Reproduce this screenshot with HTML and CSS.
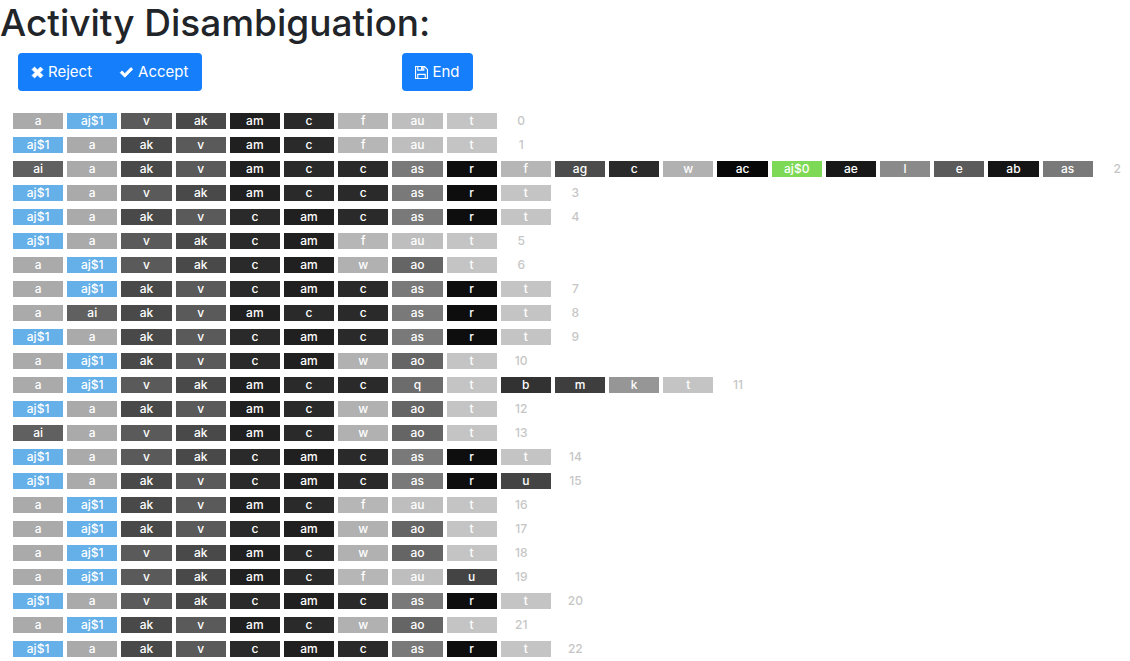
FILE: index.html
```html
<!DOCTYPE html>
<html lang="en">
<head>
<meta charset="utf-8">
<meta name="viewport" content="width=device-width, initial-scale=1">
<title>Activity Disambiguation</title>
<link rel="stylesheet" href="styles.css">
</head>
<body>
<main class="page">
  <h1 class="title">Activity Disambiguation:</h1>
  <div class="toolbar">
    <div class="button-group">
      <button class="button" type="button">
        <svg class="icon" viewBox="0 0 14 14" aria-hidden="true"><path d="M3.8 1.2 7 4.4 10.2 1.2 12.8 3.8 9.6 7 12.8 10.2 10.2 12.8 7 9.6 3.8 12.8 1.2 10.2 4.4 7 1.2 3.8Z" fill="currentColor" stroke="currentColor" stroke-linejoin="round"/></svg>
        Reject
      </button>
      <button class="button" type="button">
        <svg class="icon icon-wide" viewBox="0 0 16 14" aria-hidden="true"><path d="M1.3 7.2 3.2 5.3 6.2 8.3 12.8 1.7 14.7 3.6 6.2 12.1Z" fill="currentColor" stroke="currentColor" stroke-linejoin="round"/></svg>
        Accept
      </button>
    </div>
    <button class="button" type="button">
      <svg class="icon" viewBox="0 0 14 14" aria-hidden="true"><path d="M.6.6h9.7l3.1 3.1v9.7H.6ZM3 .5v4h6.5v-4M3 13.5V9h8v4.5" fill="none" stroke="currentColor" stroke-width="1.2"/><path d="M6.5 1h2v3h-2Z" fill="currentColor"/></svg>
      End
    </button>
  </div>
  <ol class="traces" id="traces"></ol>
</main>
<script src="traces.js"></script>
</body>
</html>
```
FILE: styles.css
```css
* {
  box-sizing: border-box;
}

body {
  margin: 0;
  background: #fff;
  color: #212529;
  font-family: Inter, "Liberation Sans", sans-serif;
  font-size: 15px;
  line-height: 24px;
}

.page {
  overflow: hidden;
}

.title {
  margin: 0 0 7px;
  font-size: 37px;
  font-weight: 500;
  line-height: 46px;
}

.toolbar {
  display: flex;
  gap: 200px;
  padding: 0 18px;
}

.button-group {
  display: flex;
}

.button {
  display: flex;
  align-items: center;
  gap: 4px;
  height: 38px;
  padding: 0 14px 0 13px;
  border: 0;
  border-radius: 4px;
  background: #157efb;
  color: #fff;
  font: inherit;
  white-space: nowrap;
}

.button-group .button:first-child {
  border-radius: 4px 0 0 4px;
}

.button-group .button:last-child {
  border-radius: 0 4px 4px 0;
}

.icon {
  width: 13px;
  height: 13px;
}

.icon-wide {
  width: 15px;
}

.traces {
  margin: 0;
  padding: 22px 33px 0 13px;
  list-style: none;
  font-size: 12px;
  font-weight: 500;
  line-height: 16px;
}

.trace {
  display: flex;
  padding-bottom: 8px;
}

.trace:last-child {
  padding-bottom: 4px;
}

.slot {
  flex: 0 0 5%;
  padding-right: 4px;
}

.event {
  display: block;
  color: #fff;
  text-align: center;
}

.index {
  flex: 0 0 41px;
  color: #c6c6c6;
  text-align: center;
}

.event-a { background: #aaa; }
.event-b { background: #323232; }
.event-c { background: #2a2a2a; }
.event-e { background: #5b5b5b; }
.event-f { background: #b6b6b6; }
.event-k { background: #969696; }
.event-l { background: #8a8a8a; }
.event-m { background: #3e3e3e; }
.event-q { background: #6c6c6c; }
.event-r { background: #0e0e0e; }
.event-t { background: #c4c4c4; }
.event-u { background: #444; }
.event-v { background: #5a5a5a; }
.event-w { background: #b1b1b1; }
.event-ab { background: #151515; }
.event-ac { background: #080808; }
.event-ae { background: #181818; }
.event-ag { background: #4c4c4c; }
.event-ai { background: #606060; }
.event-ak { background: #494949; }
.event-am { background: #202020; }
.event-ao { background: #656565; }
.event-as { background: #797979; }
.event-au { background: #bebebe; }
.event-aj0 { background: #7ed957; }
.event-aj1 { background: #66b0e9; }
```
FILE: traces.js
```js
const traces = [
  "a aj$1 v ak am c f au t",
  "aj$1 a ak v am c f au t",
  "ai a ak v am c c as r f ag c w ac aj$0 ae l e ab as",
  "aj$1 a v ak am c c as r t",
  "aj$1 a ak v c am c as r t",
  "aj$1 a v ak c am f au t",
  "a aj$1 v ak c am w ao t",
  "a aj$1 ak v c am c as r t",
  "a ai ak v am c c as r t",
  "aj$1 a ak v c am c as r t",
  "a aj$1 ak v c am w ao t",
  "a aj$1 v ak am c c q t b m k t",
  "aj$1 a ak v am c w ao t",
  "ai a v ak am c w ao t",
  "aj$1 a v ak c am c as r t",
  "aj$1 a ak v c am c as r u",
  "a aj$1 ak v am c f au t",
  "a aj$1 ak v c am w ao t",
  "a aj$1 v ak am c w ao t",
  "a aj$1 v ak am c f au u",
  "aj$1 a v ak c am c as r t",
  "a aj$1 ak v am c w ao t",
  "aj$1 a ak v c am c as r t"
];

const list = document.getElementById("traces");

traces.forEach((trace, index) => {
  const row = document.createElement("li");
  row.className = "trace";

  trace.split(" ").forEach((name) => {
    const slot = document.createElement("span");
    slot.className = "slot";
    const event = document.createElement("span");
    event.className = "event event-" + name.replace("$", "");
    event.textContent = name;
    slot.append(event);
    row.append(slot);
  });

  const number = document.createElement("span");
  number.className = "index";
  number.textContent = index;
  row.append(number);
  list.append(row);
});
```
